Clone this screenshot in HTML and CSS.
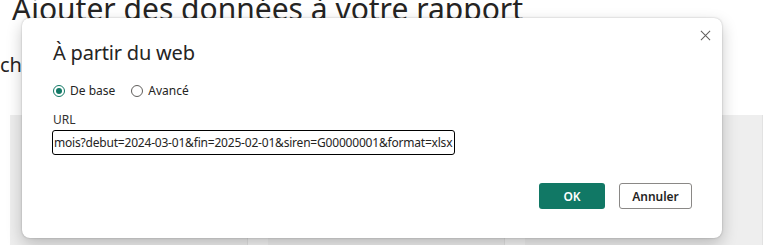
FILE: index.html
```html
<!DOCTYPE html>
<html lang="fr">
<head>
    <meta charset="UTF-8">
    <meta name="viewport" content="width=device-width, initial-scale=1.0">
    <title>À partir du web</title>
    <link rel="stylesheet" href="styles.css">
</head>
<body>
    <div class="page">
        <h1 class="page-title">Ajouter des données à votre rapport</h1>
        <p class="page-text">choisissez une source de données</p>
        <div class="cards">
            <div class="card"></div>
            <div class="card"></div>
            <div class="card"></div>
        </div>
    </div>

    <div class="dialog">
        <button class="close-btn" aria-label="Fermer">
            <svg viewBox="0 0 12 12" class="close-icon">
                <path d="M1 1L11 11M11 1L1 11"/>
            </svg>
        </button>
        <h2 class="dialog-title">À partir du web</h2>

        <div class="radio-group">
            <label class="radio checked"><span class="radio-dot"></span>De base</label>
            <label class="radio"><span class="radio-dot"></span>Avancé</label>
        </div>

        <div class="field">
            <div class="field-label">URL</div>
            <div class="field-input">mois?debut=2024-03-01&amp;fin=2025-02-01&amp;siren=G00000001&amp;format=xlsx</div>
        </div>

        <div class="dialog-actions">
            <button class="btn btn-primary">OK</button>
            <button class="btn btn-secondary">Annuler</button>
        </div>
    </div>
</body>
</html>
```

FILE: styles.css
```css
* {
    margin: 0;
    padding: 0;
    box-sizing: border-box;
}

body {
    font-family: 'Segoe UI', 'Noto Sans', sans-serif;
    width: 763px;
    height: 245px;
    overflow: hidden;
    background: #ffffff;
    position: relative;
    color: #252423;
}

/* Background page behind the dialog */
.page {
    padding-left: 12px;
}

.page-title {
    font-size: 30px;
    font-weight: 400;
    line-height: 40px;
    margin-top: -11px;
    color: #252423;
    white-space: nowrap;
}

.page-text {
    font-size: 20px;
    line-height: 26px;
    margin-top: 23px;
    margin-left: -12px;
    white-space: nowrap;
}

.cards {
    display: flex;
    gap: 20px;
    margin-top: 37px;
    margin-left: -2px;
    height: 140px;
    background: #f5f5f5;
}

.card {
    width: 238px;
    background: #eeeeee;
    border-right: 1px solid #e2e2e2;
}

/* Dialog */
.dialog {
    position: absolute;
    left: 22px;
    top: 18px;
    width: 700px;
    height: 220px;
    background: #ffffff;
    border-radius: 8px;
    box-shadow: 0 0 2px rgba(0, 0, 0, 0.25), 0 6px 16px rgba(0, 0, 0, 0.22);
    padding: 22px 31px 0;
}

.close-btn {
    position: absolute;
    top: 9px;
    right: 9px;
    width: 16px;
    height: 16px;
    border: none;
    background: none;
    display: flex;
    align-items: center;
    justify-content: center;
}

.close-icon {
    width: 11px;
    height: 11px;
    stroke: #605e5c;
    stroke-width: 1.1;
    fill: none;
}

.dialog-title {
    font-size: 20px;
    font-weight: 400;
    line-height: 26px;
    color: #252423;
    letter-spacing: -0.2px;
}

.radio-group {
    display: flex;
    gap: 16px;
    margin-top: 17px;
}

.radio {
    display: flex;
    align-items: center;
    gap: 5px;
    font-size: 12px;
    line-height: 16px;
    color: #252423;
}

.radio-dot {
    width: 12px;
    height: 12px;
    border: 1px solid #605e5c;
    border-radius: 50%;
    position: relative;
}

.radio.checked .radio-dot {
    border-color: #117865;
}

.radio.checked .radio-dot::after {
    content: '';
    position: absolute;
    left: 2px;
    top: 2px;
    width: 6px;
    height: 6px;
    border-radius: 50%;
    background: #117865;
}

.field {
    margin-top: 13px;
}

.field-label {
    font-size: 12px;
    line-height: 16px;
    color: #323130;
}

.field-input {
    margin-top: 2px;
    margin-left: -1px;
    width: 403px;
    height: 25px;
    border: 1px solid #000000;
    border-radius: 3px;
    font-size: 12px;
    letter-spacing: -0.2px;
    line-height: 23px;
    padding-left: 1px;
    white-space: nowrap;
    overflow: hidden;
    color: #252423;
}

.dialog-actions {
    display: flex;
    justify-content: flex-end;
    gap: 14px;
    margin-top: 28px;
    margin-right: -1px;
}

.btn {
    height: 26px;
    border-radius: 3px;
    font-family: inherit;
    font-size: 12px;
    font-weight: 600;
}

.btn-primary {
    width: 66px;
    background: #117865;
    border: none;
    color: #ffffff;
}

.btn-secondary {
    width: 73px;
    background: #ffffff;
    border: 1px solid #8a8886;
    color: #252423;
}
```
